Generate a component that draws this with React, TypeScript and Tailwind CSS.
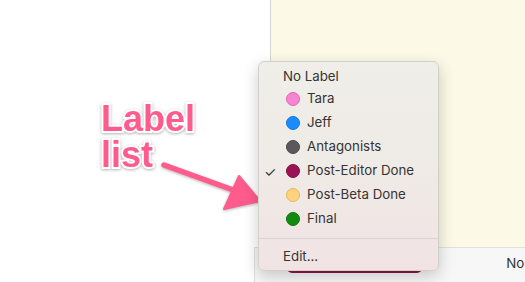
import React from "react";

const items = [
  { name: "Tara", fill: "#f784d2", border: "#e565b8" },
  { name: "Jeff", fill: "#1a8cff", border: "#0f78e0" },
  { name: "Antagonists", fill: "#59585d", border: "#4a494e" },
  { name: "Post-Editor Done", fill: "#9a1454", border: "#851047", checked: true },
  { name: "Post-Beta Done", fill: "#fdd37e", border: "#e8b85c" },
  { name: "Final", fill: "#118a11", border: "#0c780c" },
];

export default function App() {
  return (
    <div className="relative w-[525px] h-[282px] overflow-hidden bg-white font-['Inter',sans-serif]">
      <div className="flex h-full">
        <div className="w-[254px] bg-white" />
        <div className="flex flex-1 flex-col">
          <div className="flex h-[247px]">
            <div className="w-[16px] bg-white" />
            <div className="flex-1 border-l border-[#d5d5d5] bg-[#fcf9e6]" />
          </div>
          <div className="flex flex-1 items-start justify-end overflow-hidden border-l border-t border-[#e0e0e0] bg-[#f7f7f7] pt-[6px]">
            <span className="mr-[-37px] text-[13.3px] text-[#333]">No Label</span>
          </div>
        </div>
      </div>

      {/* button peeking under the menu */}
      <div className="absolute left-[287px] top-[250px] h-[23px] w-[135px] rounded-b-[5px] bg-[#8c1747]" />

      {/* annotation */}
      <div className="absolute left-[101px] top-[101px] font-['Liberation_Sans',sans-serif] text-[36px] font-bold leading-[36px] text-[#ff5b8d] [-webkit-text-stroke:4px_white] [paint-order:stroke_fill] drop-shadow-[0_1px_1.5px_rgba(0,0,0,0.3)]">
        <div>Label</div>
        <div>list</div>
      </div>
      <svg
        className="absolute left-0 top-0 drop-shadow-[0_1px_1.5px_rgba(0,0,0,0.3)]"
        width="525"
        height="282"
        viewBox="0 0 525 282"
      >
        <line x1="164" y1="165" x2="236" y2="191" stroke="#ff5b8d" strokeWidth="5.5" strokeLinecap="round" />
        <polygon points="239,176 260,201 224,209" fill="#ff5b8d" stroke="#ff5b8d" strokeWidth="2" strokeLinejoin="round" />
      </svg>

      {/* menu */}
      <div className="absolute left-[258px] top-[61px] flex h-[210px] w-[181px] flex-col rounded-[6px] border border-[#d3d0ca] bg-gradient-to-b from-[#efeee8] via-[#efebe6] to-[#f1e3e4] pt-[4px] text-[13.3px] text-[#363432] shadow-[0_5px_16px_rgba(0,0,0,0.2)]">
        <div className="flex h-[21px] items-center pl-[24px]">No Label</div>
        {items.map((it) => (
          <div key={it.name} className="relative flex h-[24px] items-center">
            {it.checked && (
              <span className="absolute left-[5px] top-[2px] text-[14px] text-[#363432]">✓</span>
            )}
            <span
              className="ml-[27px] h-[14px] w-[14px] rounded-full border"
              style={{ backgroundColor: it.fill, borderColor: it.border }}
            />
            <span className="ml-[7px]">{it.name}</span>
          </div>
        ))}
        <div className="flex h-[14px] items-center">
          <div className="h-px w-full bg-[#d9d4d1]" />
        </div>
        <div className="flex h-[24px] items-center pl-[24px]">Edit...</div>
      </div>
    </div>
  );
}
